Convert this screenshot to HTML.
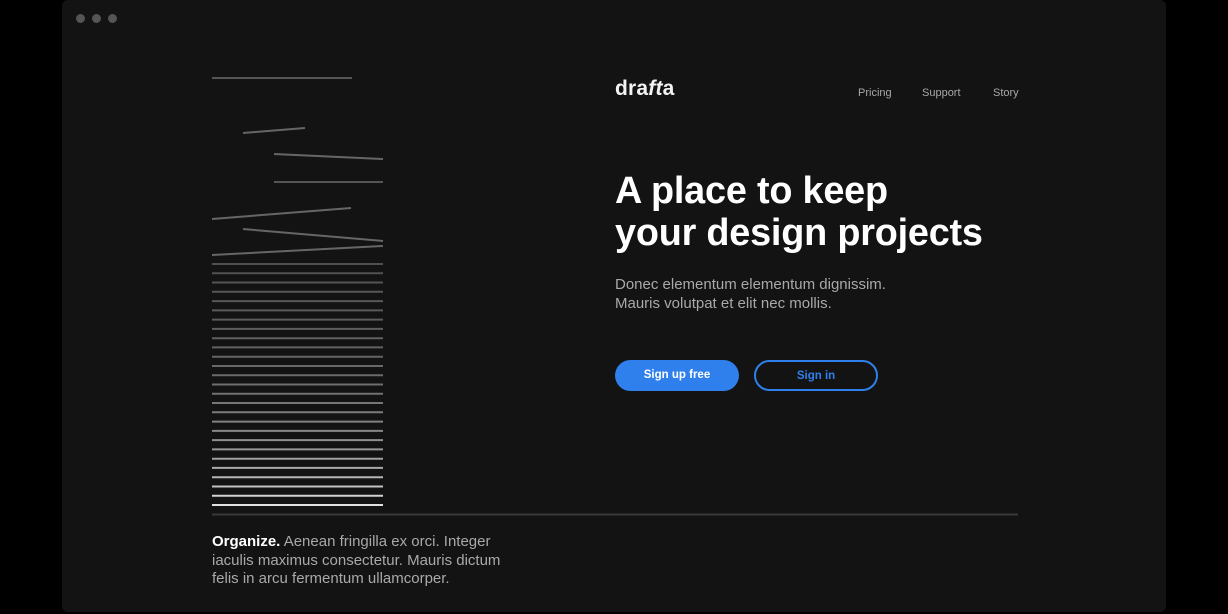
<!DOCTYPE html>
<html><head><meta charset="utf-8"><style>
html,body{margin:0;padding:0;background:#000;width:1228px;height:614px;overflow:hidden;font-family:"Liberation Sans",sans-serif}
.win{position:absolute;left:62px;top:0;width:1104px;height:612px;background:#131313;border-radius:6px}
.dot{position:absolute;top:14px;width:9px;height:9px;border-radius:50%;background:#555}
.abs{position:absolute;white-space:nowrap}
.logo{left:615px;top:77px;font-size:21px;font-weight:bold;color:#f2f2f2;letter-spacing:0.2px}
.nav{top:87px;font-size:11px;color:#a8a8a8}
h1{position:absolute;left:615px;top:170px;margin:0;font-size:37.8px;line-height:42px;color:#fff;font-weight:bold;letter-spacing:-0.2px}
.sub{left:615px;top:275px;font-size:15px;line-height:19px;color:#a9a9a9}
.btn{position:absolute;top:360px;width:124px;height:31px;border-radius:16px;box-sizing:border-box;font-size:11.5px;font-weight:bold;text-align:center;line-height:31px}
.b1{left:615px;background:#2f80ed;color:#fff}
.b2{left:754px;border:2px solid #2f80ed;color:#2f80ed;line-height:28px}
.bot{left:212px;top:533px;font-size:15px;line-height:18.5px;color:#a9a9a9}
.bot b{color:#fff}
</style></head><body>
<div class="win"></div>
<div class="dot" style="left:76px"></div><div class="dot" style="left:92px"></div><div class="dot" style="left:108px"></div>
<svg class="abs" style="left:0;top:0" width="1228" height="614">
<g stroke-width="2">
<line x1="212" y1="78" x2="352" y2="78" stroke="#555"/>
<line x1="243" y1="133" x2="305" y2="128" stroke="#666"/>
<line x1="274" y1="154" x2="383" y2="159" stroke="#666"/>
<line x1="274" y1="182" x2="383" y2="182" stroke="#555"/>
<line x1="212" y1="219" x2="351" y2="208" stroke="#666"/>
<line x1="243" y1="229" x2="383" y2="241" stroke="#666"/>
<line x1="212" y1="255" x2="383" y2="246" stroke="#666"/>
<line x1="212" y1="264" x2="383" y2="264" stroke="#505050"/>
<line x1="212" y1="273.3" x2="383" y2="273.3" stroke="#525252"/>
<line x1="212" y1="282.5" x2="383" y2="282.5" stroke="#545454"/>
<line x1="212" y1="291.8" x2="383" y2="291.8" stroke="#565656"/>
<line x1="212" y1="301.1" x2="383" y2="301.1" stroke="#585858"/>
<line x1="212" y1="310.4" x2="383" y2="310.4" stroke="#5a5a5a"/>
<line x1="212" y1="319.6" x2="383" y2="319.6" stroke="#5c5c5c"/>
<line x1="212" y1="328.9" x2="383" y2="328.9" stroke="#5e5e5e"/>
<line x1="212" y1="338.2" x2="383" y2="338.2" stroke="#606060"/>
<line x1="212" y1="347.4" x2="383" y2="347.4" stroke="#626262"/>
<line x1="212" y1="356.7" x2="383" y2="356.7" stroke="#656565"/>
<line x1="212" y1="366" x2="383" y2="366" stroke="#686868"/>
<line x1="212" y1="375.2" x2="383" y2="375.2" stroke="#6b6b6b"/>
<line x1="212" y1="384.5" x2="383" y2="384.5" stroke="#6e6e6e"/>
<line x1="212" y1="393.8" x2="383" y2="393.8" stroke="#727272"/>
<line x1="212" y1="403" x2="383" y2="403" stroke="#777"/>
<line x1="212" y1="412.3" x2="383" y2="412.3" stroke="#7c7c7c"/>
<line x1="212" y1="421.6" x2="383" y2="421.6" stroke="#828282"/>
<line x1="212" y1="430.9" x2="383" y2="430.9" stroke="#888"/>
<line x1="212" y1="440.1" x2="383" y2="440.1" stroke="#8f8f8f"/>
<line x1="212" y1="449.4" x2="383" y2="449.4" stroke="#979797"/>
<line x1="212" y1="458.7" x2="383" y2="458.7" stroke="#a0a0a0"/>
<line x1="212" y1="467.9" x2="383" y2="467.9" stroke="#aaa"/>
<line x1="212" y1="477.2" x2="383" y2="477.2" stroke="#b5b5b5"/>
<line x1="212" y1="486.5" x2="383" y2="486.5" stroke="#c2c2c2"/>
<line x1="212" y1="495.7" x2="383" y2="495.7" stroke="#d2d2d2"/>
<line x1="212" y1="505" x2="383" y2="505" stroke="#e0e0e0"/>
<line x1="212" y1="514.5" x2="1018" y2="514.5" stroke="#3a3a3a"/>
</g></svg>
<div class="abs logo">dra<i>ft</i>a</div>
<div class="abs nav" style="left:858px">Pricing</div>
<div class="abs nav" style="left:922px">Support</div>
<div class="abs nav" style="left:993px">Story</div>
<h1>A place to keep<br>your design projects</h1>
<div class="abs sub">Donec elementum elementum dignissim.<br>Mauris volutpat et elit nec mollis.</div>
<div class="btn b1">Sign up free</div>
<div class="btn b2">Sign in</div>
<div class="abs bot"><b>Organize.</b> Aenean fringilla ex orci. Integer<br>iaculis maximus consectetur. Mauris dictum<br>felis in arcu fermentum ullamcorper.</div>
</body></html>
